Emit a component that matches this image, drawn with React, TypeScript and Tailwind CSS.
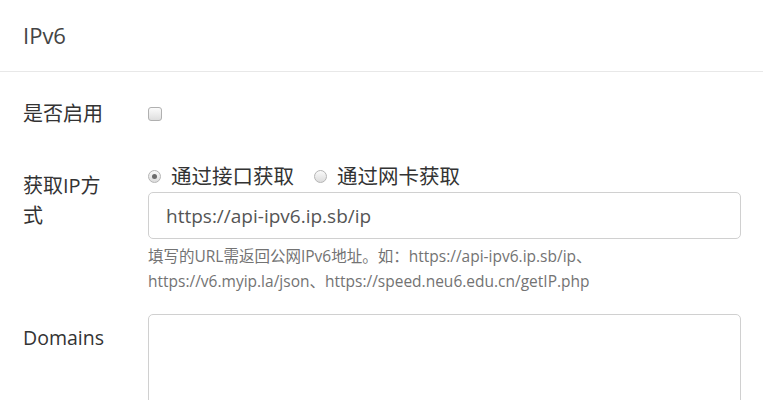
import { useState } from 'react'

const font = { fontFamily: '"Open Sans", "Noto Sans CJK SC", sans-serif' }

function Radio({ checked }: { checked: boolean }) {
  return (
    <span className="relative inline-flex h-[13px] w-[13px] shrink-0 items-center justify-center rounded-full border border-[#b5b5b5] bg-gradient-to-b from-[#fafafa] to-[#dcdcdc]">
      {checked && <span className="h-[5px] w-[5px] rounded-full bg-[#6b6b6b]" />}
    </span>
  )
}

export default function App() {
  const [mode, setMode] = useState<'api' | 'nic'>('api')
  const [enabled, setEnabled] = useState(false)

  return (
    <div className="h-[400px] w-full overflow-hidden bg-white text-[#333]" style={font}>
      {/* Header */}
      <div className="flex h-[72px] items-center border-b border-[#e8e8e8] pl-[23px]">
        <h3 className="text-[22px] font-normal text-[#444]">IPv6</h3>
      </div>

      {/* Enable */}
      <div className="mt-[27px] flex pl-[23px]">
        <label className="w-[125px] shrink-0 text-[20px] leading-[30px]">是否启用</label>
        <button
          onClick={() => setEnabled(!enabled)}
          className="mt-[8px] h-[14px] w-[14px] rounded-[3px] border border-[#b0b0b0] bg-gradient-to-b from-[#fbfbfb] to-[#dedede]"
        />
      </div>

      {/* Mode */}
      <div className="mt-[32px] flex pl-[23px] pr-[22px]">
        <label className="w-[125px] shrink-0 pt-[10px] text-[20px] leading-[30px]">
          <span className="block w-[92px]">获取IP方式</span>
        </label>
        <div className="flex-1">
          <div className="flex h-[30px] items-center text-[20.5px] text-[#333]">
            <button onClick={() => setMode('api')} className="flex items-center">
              <Radio checked={mode === 'api'} />
              <span className="ml-[10px]">通过接口获取</span>
            </button>
            <button onClick={() => setMode('nic')} className="ml-[20px] flex items-center">
              <Radio checked={mode === 'nic'} />
              <span className="ml-[10px]">通过网卡获取</span>
            </button>
          </div>
          <input
            defaultValue="https://api-ipv6.ip.sb/ip"
            className="mt-[1px] h-[47px] w-full rounded-[5px] border border-[#d0d0d0] px-[17px] text-[19px] text-[#555] outline-none"
          />
          <p className="mt-[5px] text-[15.5px] leading-[25px] text-[#737373]">
            填写的URL需返回公网IPv6地址。如：https://api-ipv6.ip.sb/ip、
            <br />
            https://v6.myip.la/json、https://speed.neu6.edu.cn/getIP.php
          </p>
        </div>
      </div>

      {/* Domains */}
      <div className="mt-[20px] flex pl-[23px] pr-[22px]">
        <label className="w-[125px] shrink-0 pt-[9px] text-[19.5px] leading-[30px]">Domains</label>
        <div className="flex-1">
          <textarea className="block h-[120px] w-full resize-none rounded-[5px] border border-[#d0d0d0] px-[17px] py-[10px] text-[19px] outline-none" />
        </div>
      </div>
    </div>
  )
}
